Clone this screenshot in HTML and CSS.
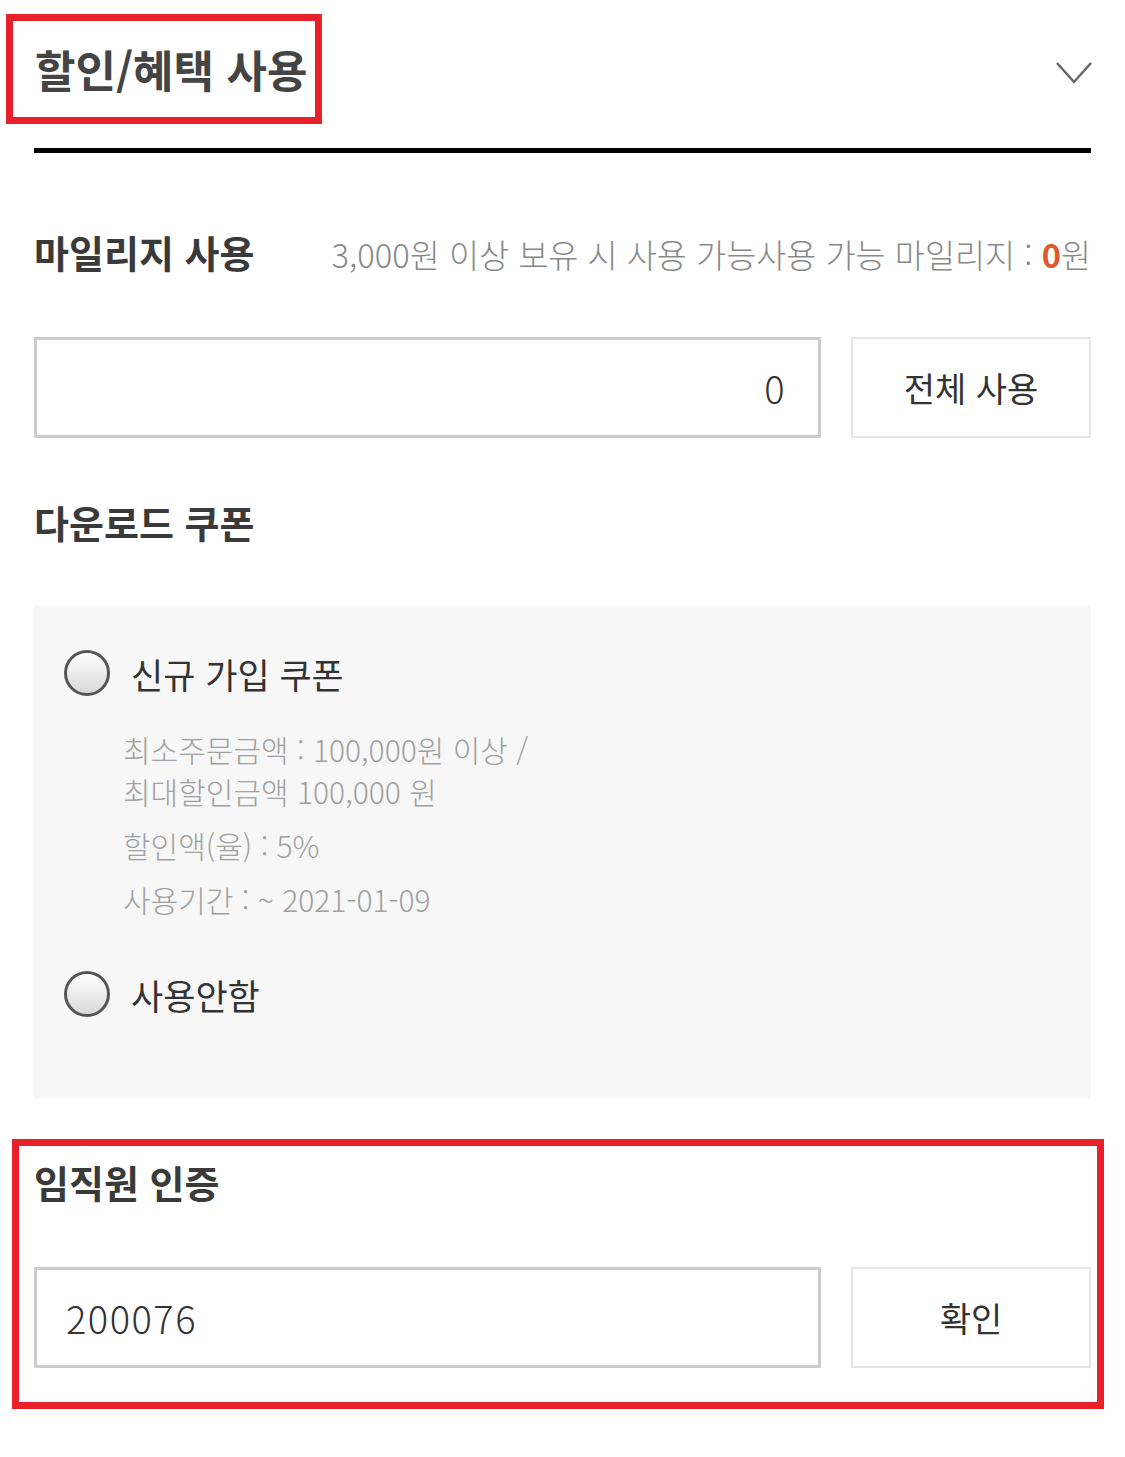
FILE: index.html
```html
<!DOCTYPE html>
<html lang="ko">
<head>
  <meta charset="UTF-8" />
  <title>할인/혜택 사용</title>
  <link rel="stylesheet" href="styles.css">
</head>
<body>

<div class="header">
  <h2 class="title-mark">할인/혜택 사용</h2>
  <svg class="chevron" width="38" height="26" viewBox="0 0 38 26">
    <polyline points="2,3 19,22 36,3" fill="none" stroke="#666" stroke-width="2.5" />
  </svg>
</div>

<div class="row-head">
  <h3>마일리지 사용</h3>
  <p class="info">3,000원 이상 보유 시 사용 가능사용 가능 마일리지 : <strong>0</strong>원</p>
</div>
<div class="field-row">
  <input class="field right" type="text" value="0">
  <button class="btn">전체 사용</button>
</div>

<h3 class="row-head">다운로드 쿠폰</h3>
<div class="coupon-box">
  <label class="radio-row">
    <input type="radio" name="coupon">
    <span>신규 가입 쿠폰</span>
  </label>
  <div class="coupon-info">
    <p>최소주문금액 : 100,000원 이상 /<br>최대할인금액 100,000 원</p>
    <p>할인액(율) : 5%</p>
    <p>사용기간 : ~ 2021-01-09</p>
  </div>
  <label class="radio-row second">
    <input type="radio" name="coupon">
    <span>사용안함</span>
  </label>
</div>

<div class="staff-mark">
  <h3 class="row-head">임직원 인증</h3>
  <div class="field-row">
    <input class="field" type="text" value="200076">
    <button class="btn">확인</button>
  </div>
</div>

</body>
</html>
```

FILE: styles.css
```css
body {
  margin: 0;
  padding: 0 34px;
  font-family: "Noto Sans CJK KR", sans-serif;
  background: #fff;
  color: #333;
}
h2, h3, p {
  margin: 0;
}
.header {
  display: flex;
  justify-content: space-between;
  align-items: center;
  padding-top: 14px;
  padding-bottom: 24px;
  border-bottom: 5px solid #000;
}
.title-mark {
  margin-left: -28px;
  box-sizing: border-box;
  width: 316px;
  height: 110px;
  padding-left: 22px;
  border: 7px solid #e8202a;
  font-size: 44px;
  line-height: 96px;
  font-weight: 700;
  color: #444;
  white-space: nowrap;
}
.chevron {
  margin-right: -2px;
  margin-top: 8px;
}
.row-head {
  display: flex;
  justify-content: space-between;
  align-items: baseline;
  margin-top: 70px;
  height: 58px;
  line-height: 58px;
}
h3, h3.row-head {
  font-size: 38px;
  font-weight: 700;
  color: #3a3a3a;
}
h3.row-head {
  margin-top: 55px;
}
.info {
  font-size: 32.7px;
  line-height: 50px;
  font-weight: 300;
  color: #888;
}
.info strong {
  color: #e0592a;
  font-weight: 700;
}
.field-row {
  display: flex;
  gap: 30px;
  margin-top: 56px;
}
.field {
  flex: 1;
  box-sizing: border-box;
  height: 101px;
  padding: 0 32px 0 29px;
  border: 3px solid #ccc;
  font-family: inherit;
  font-size: 38px;
  letter-spacing: 1.5px;
  font-weight: 300;
  color: #333;
  outline: none;
}
.field.right {
  text-align: right;
}
.btn {
  box-sizing: border-box;
  width: 240px;
  height: 101px;
  border: 2px solid #e6e6e6;
  background: #fff;
  font-family: inherit;
  font-size: 34px;
  color: #333;
  cursor: pointer;
}
.coupon-box {
  margin-top: 55px;
  padding: 44px 30px 81px;
  background: #f7f7f7;
}
.radio-row {
  display: flex;
  align-items: center;
  gap: 21px;
  height: 46px;
  font-size: 35px;
  color: #333;
}
.radio-row.second {
  margin-top: 51px;
}
.radio-row input {
  appearance: none;
  margin: 0;
  box-sizing: border-box;
  width: 46px;
  height: 46px;
  border: 3px solid #555;
  border-radius: 50%;
  background: linear-gradient(#fff, #d9d9d9);
}
.coupon-info {
  margin-top: 32px;
  padding-left: 59px;
  font-size: 30px;
  font-weight: 300;
  line-height: 42px;
  color: #a0a0a0;
}
.coupon-info p + p {
  margin-top: 12px;
}
.staff-mark {
  margin: 41px -13px 0 -22px;
  padding: 0 6px 34px 15px;
  border: 7px solid #e8202a;
}
.staff-mark h3.row-head {
  margin-top: 7px;
}
```
